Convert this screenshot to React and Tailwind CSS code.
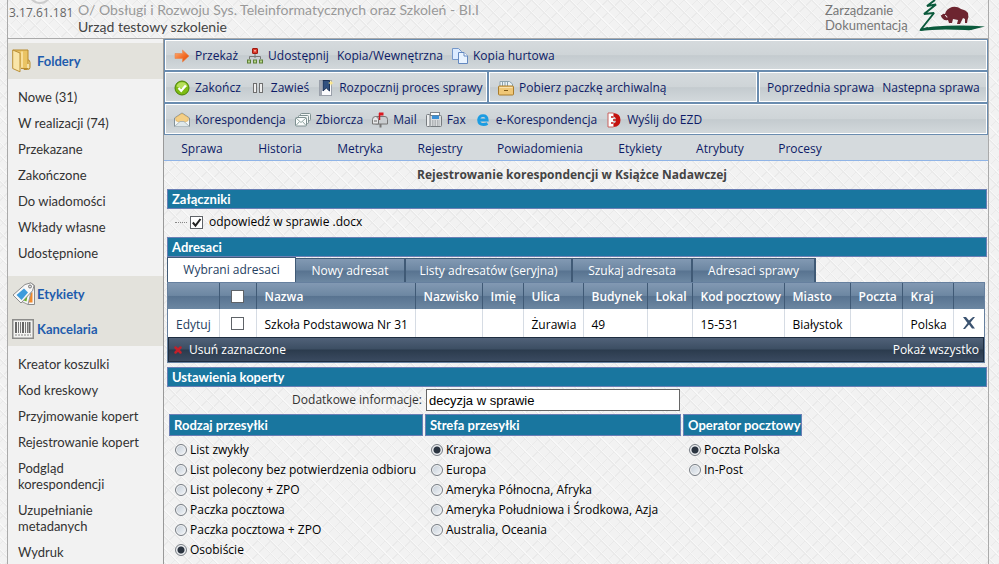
import React from 'react';
import { X } from 'lucide-react';

const FOLDERS = ['Nowe (31)', 'W realizacji (74)', 'Przekazane', 'Zakończone', 'Do wiadomości', 'Wkłady własne', 'Udostępnione'];

const OFFICE = [
  'Kreator koszulki',
  'Kod kreskowy',
  'Przyjmowanie kopert',
  'Rejestrowanie kopert',
  'Podgląd korespondencji',
  'Uzupełnianie metadanych',
  'Wydruk',
];

const SECTIONS = [
  { label: 'Sprawa', cls: 'w-[76px]' },
  { label: 'Historia', cls: 'w-20' },
  { label: 'Metryka', cls: 'w-20' },
  { label: 'Rejestry', cls: 'w-20' },
  { label: 'Powiadomienia', cls: 'w-[120px]' },
  { label: 'Etykiety', cls: 'w-20' },
  { label: 'Atrybuty', cls: 'w-20' },
  { label: 'Procesy', cls: 'w-20' },
];

const TABS = [
  { label: 'Nowy adresat', cls: 'w-[110px]' },
  { label: 'Listy adresatów (seryjna)', cls: 'w-[167px]' },
  { label: 'Szukaj adresata', cls: 'w-[120px]' },
  { label: 'Adresaci sprawy', cls: 'w-[123px]' },
];

const COLUMNS = [
  { label: 'Nazwa', value: 'Szkoła Podstawowa Nr 31', cls: '' },
  { label: 'Nazwisko', value: '', cls: 'w-[67px]' },
  { label: 'Imię', value: '', cls: 'w-[41px]' },
  { label: 'Ulica', value: 'Żurawia', cls: 'w-[60px]' },
  { label: 'Budynek', value: '49', cls: 'w-16' },
  { label: 'Lokal', value: '', cls: 'w-[45px]' },
  { label: 'Kod pocztowy', value: '15-531', cls: 'w-[92px]' },
  { label: 'Miasto', value: 'Białystok', cls: 'w-[66px]' },
  { label: 'Poczta', value: '', cls: 'w-[52px]' },
  { label: 'Kraj', value: 'Polska', cls: 'w-[51px]' },
];

const KINDS = [
  'List zwykły',
  'List polecony bez potwierdzenia odbioru',
  'List polecony + ZPO',
  'Paczka pocztowa',
  'Paczka pocztowa + ZPO',
  'Osobiście',
  '',
];
const ZONES = ['Krajowa', 'Europa', 'Ameryka Północna, Afryka', 'Ameryka Południowa i Środkowa, Azja', 'Australia, Oceania'];
const OPERATORS = ['Poczta Polska', 'In-Post'];

/* ---------- icons ---------- */

const ArrowIcon = () => (
  <svg width="16" height="16" viewBox="0 0 16 16">
    <defs>
      <linearGradient id="arrow" x1="0" y1="0" x2="1" y2="1">
        <stop offset="0" stopColor="#ffb37a" />
        <stop offset="0.6" stopColor="#f26a24" />
        <stop offset="1" stopColor="#d94400" />
      </linearGradient>
    </defs>
    <path d="M1 5.500h7.500V2L15 8l-6.500 6v-3.500H1z" fill="url(#arrow)" stroke="#e8864f" strokeWidth="0.600" />
  </svg>
);

const TreeIcon = () => (
  <svg width="16" height="16" viewBox="0 0 16 16">
    <path d="M8 6v4M2.500 11V8.500h11V11" fill="none" stroke="#777" />
    <rect x="5.500" y="0.500" width="5" height="5" rx="0.500" fill="#dc3b2c" stroke="#9e1a12" />
    <rect x="7" y="2" width="2" height="1.500" fill="#f6a59a" />
    {[0.5, 6.5, 12.5].map((x) => (
      <rect key={x} x={x} y="12" width="3" height="3" fill="#b6d48a" stroke="#5d7f36" />
    ))}
  </svg>
);

const CopyIcon = () => (
  <svg width="16" height="16" viewBox="0 0 16 16">
    <path d="M.5.5h6l3 3v8h-9z" fill="#dcebff" stroke="#7597c9" />
    <path d="M6.500 4.500h5.500l3.500 3.500v7.500h-9z" fill="#e9f3ff" stroke="#6388c0" />
    <path d="M12 4.500V8h3.500" fill="#fff" stroke="#6388c0" />
  </svg>
);

const CheckIcon = () => (
  <svg width="16" height="16" viewBox="0 0 16 16">
    <circle cx="8" cy="8" r="7" fill="#7dbb12" stroke="#4b8208" />
    <path d="M2.500 6.500a5.700 5.700 0 0 1 11 0q-5.500 3-11 0" fill="#b7df5c" />
    <path d="M4.500 8l2.700 2.800L11.800 5.500" fill="none" stroke="#fff" strokeWidth="2.200" />
  </svg>
);

const PauseIcon = () => (
  <svg width="12" height="16" viewBox="0 0 12 16">
    <rect x="1.500" y="3.500" width="3" height="9" fill="#eee" stroke="#6f6f6f" />
    <rect x="7.500" y="3.500" width="3" height="9" fill="#eee" stroke="#6f6f6f" />
  </svg>
);

const BookmarkIcon = () => (
  <svg width="16" height="16" viewBox="0 0 16 16">
    <rect x="1.500" y="0.500" width="12" height="15" fill="#fbfbfd" stroke="#9aa0aa" />
    <path d="M3 1v14" stroke="#4a5568" />
    <path d="M5 .5h6.500v10.500L8.300 8 5 11z" fill="#31507f" stroke="#1c3154" />
    <path d="M13 0l.8 2.200L16 3l-2.200.8L13 6l-.8-2.200L10 3l2.200-.8z" fill="#ffe98a" />
  </svg>
);

const ArchiveIcon = () => (
  <svg width="16" height="16" viewBox="0 0 16 16">
    <path d="M2 6V1.500h9.500l3 2.500v2" fill="#e9f1f4" stroke="#8da3ad" />
    <path d="M4.500 2v4M7 2v4M9.500 2v4" stroke="#8da3ad" />
    <rect x="0.500" y="6" width="15" height="9" rx="1" fill="#efc777" stroke="#a97c2c" />
    <path d="M1.500 7.500h13" stroke="#f9e2ad" />
    <path d="M6 10.500h4" stroke="#805a18" />
  </svg>
);

const EnvelopeIcon = () => (
  <svg width="18" height="16" viewBox="0 0 18 16">
    <path d="M1.500 6L9 1l7.500 5v8.500h-15z" fill="#f4f8f8" stroke="#84929a" />
    <path d="M2.500 5.800L9 1.500l6.500 4.300-.5 3L9 11 3 8.800z" fill="#f4cf86" stroke="#d7a650" strokeWidth="0.600" />
    <path d="M1.500 14.500L7 9.500h4l5.500 5" fill="#dfe8ea" stroke="#9caab0" strokeWidth="0.800" />
  </svg>
);

const StackIcon = () => (
  <svg width="16" height="16" viewBox="0 0 16 16">
    <rect x="5.500" y="1.500" width="10" height="7" rx="1" fill="#f3f7f6" stroke="#7e9091" />
    <rect x="3.500" y="3.500" width="10" height="8" rx="1" fill="#f3f7f6" stroke="#7e9091" />
    <rect x="0.500" y="5.500" width="11" height="8.500" rx="1" fill="#fafcfc" stroke="#7e9091" />
    <path d="M1 6l5 4.500L11 6M1 13.500l3.500-4M11 13.500l-3.500-4" fill="none" stroke="#8fa4a1" />
  </svg>
);

const MailboxIcon = () => (
  <svg width="16" height="16" viewBox="0 0 16 16">
    <path d="M3.500 4.500H13q2.500 0 2.500 3v4.500h-12z" fill="#c9cdd0" stroke="#777" />
    <path d="M.5 12V7.500q0-3 3-3t3 3V12z" fill="#e6e8e9" stroke="#777" />
    <path d="M2 9h3" stroke="#666" />
    <path d="M7.500 8V1" stroke="#c5161d" strokeWidth="1.500" />
    <rect x="7" y="0.500" width="4.500" height="3" fill="#dc1720" />
    <path d="M8.500 12v3.500" stroke="#777" strokeWidth="2" />
  </svg>
);

const FaxIcon = () => (
  <svg width="16" height="16" viewBox="0 0 16 16">
    <rect x="4.500" y="0.500" width="9" height="5" fill="#fff" stroke="#84888c" />
    <rect x="3.500" y="3.500" width="12" height="11" rx="1" fill="#d9dcde" stroke="#777c80" />
    <rect x="0.500" y="2.500" width="3.500" height="12" rx="1" fill="#eceeef" stroke="#777c80" />
    <rect x="6" y="3.500" width="7" height="3.500" fill="#3a8fd6" />
    <path d="M6 9h8M6 11h8M6 13h8" stroke="#8a8f93" strokeDasharray="1.500 1" />
  </svg>
);

const EdgeIcon = () => (
  <svg width="14" height="16" viewBox="0 0 14 16">
    <path d="M2.800 8h8.400Q11 3.600 7 3.600T2.600 8q.2 4.500 4.900 4.500 2.200 0 4-1" fill="none" stroke="#1b9ce2" strokeWidth="2.800" />
  </svg>
);

const EzdIcon = () => (
  <svg width="14" height="16" viewBox="0 0 14 16">
    <path d="M6.500 1H1v14h5.500" fill="#fff" stroke="#c8605c" />
    <path d="M6.500 1Q13.500 1.500 13.500 8t-7 7v-3.500Q9 11 9 8T6.500 4.500z" fill="#c4120e" />
    <path d="M4 5h2.500M6 8h3.500M4 11h2.500" stroke="#c4120e" strokeWidth="1.600" />
  </svg>
);

const FolderIcon = () => (
  <svg width="20" height="24" viewBox="0 0 20 24">
    <path d="M12 10.500h3.500q2.500.5 2.500 3v5q0 2-2.500 2H12z" fill="#f3d689" stroke="#b78a2e" />
    <path d="M1 1h15v18.500H9" fill="#eac464" stroke="#b78a2e" />
    <path d="M.7 1L8 4v18.800L.7 19.500z" fill="#f9e5a8" stroke="#bb9038" />
    <path d="M10 2.500v16" stroke="#f8df9c" strokeWidth="2" />
    <path d="M16 15v4" stroke="#fff2c4" strokeWidth="1.500" />
  </svg>
);

const TagsIcon = () => (
  <svg width="24" height="24" viewBox="0 0 24 24">
    <path d="M15 3l4-2 3.500 2.500v19H16z" fill="#f6f6f6" stroke="#8b8b8b" />
    <path d="M17.500 12l3-2v10.500h-4z" fill="#f18a2c" />
    <path d="M14 4l6 2-4 16.500L8.500 19z" fill="#f6f6f6" stroke="#999" />
    <path d="M16 11l-1.500 8.500-4-1.500z" fill="#6cb52a" />
    <path d="M1 13L13 2.500 19 .8l3 3-1.500 5L9 21z" fill="#f8f8f8" stroke="#8b8b8b" />
    <path d="M4.500 13l7.500-6.500 4 4-6.500 7.500z" fill="#3d9bdc" />
    <circle cx="18" cy="4.500" r="1.500" fill="#ddd" stroke="#777" />
  </svg>
);

const BarcodeIcon = () => (
  <svg width="22" height="20" viewBox="0 0 22 20">
    <rect x="0.750" y="0.750" width="20.500" height="18.500" fill="#f3f3f1" stroke="#8c8c8a" strokeWidth="1.500" />
    <path d="M4 3v11M11 3v11M17.500 3v11" stroke="#666" strokeWidth="2" />
    <path d="M6.500 3v11M8.500 3v11M13.500 3v11M15.500 3v11" stroke="#777" />
    <path d="M3 16h16" stroke="#888" strokeDasharray="2 1" />
  </svg>
);

const BisonLogo = () => (
  <svg width="68" height="34" viewBox="0 0 68 34" className="shrink-0">
    <path
      d="M17 0L9 6l9-1.500L6 14l10-1L2.500 30 10 28"
      fill="none"
      stroke="#0b5a3c"
      strokeWidth="2"
      strokeLinejoin="bevel"
    />
    <path d="M1 31Q4 27.500 16 26.500q26-2 51 0-6 1.500-12 3-2 1-8 .5Q20 28.500 1 31" fill="#0b5a3c" />
    <path
      d="M24 15q1-2 3-1 1-5 7-7 5-1 9 2 5 1 7 4 1 4-.5 7l-.5 3h-2v-4l-2-1-2 4-1 2h-3l1-4-5-1-1 4h-3l-1-3q-3 1-5-1-2-2-2-3-1-1 1-1"
      fill="#6d2530"
    />
    <path d="M27 15.500q2 0 2 2" fill="none" stroke="#f3f3f3" />
  </svg>
);

/* ---------- small pieces ---------- */

const ToolButton = ({ icon, children }) => (
  <button type="button" className="flex items-center gap-1 whitespace-nowrap">
    {icon && <span className="w-[18px] flex justify-center shrink-0">{icon}</span>}
    {children}
  </button>
);

const ToolGroup = ({ children, className = '' }) => (
  <div
    className={`h-8 flex items-center gap-2 pt-[2px] px-2 border border-[#6a8caf] outline outline-1 -outline-offset-2 outline-white bg-[linear-gradient(#d6dbde_0%,#ced4d7_50%,#c4cbcf_52%,#d3d9dc_100%)] ${className}`}
  >
    {children}
  </div>
);

const SectionBar = ({ children }) => (
  <h2 className="h-5 px-1 flex items-center border border-[#6b7fb5] bg-[#19769f] text-white font-bold text-[13px] font-['Lato',sans-serif]">
    {children}
  </h2>
);

const SideHeading = ({ icon, children, className = '' }) => (
  <h2 className={`flex items-center pl-1 bg-[#e3e2dc] text-[#1f5cad] font-bold text-[13px] ${className}`}>
    <span className="w-[25px] shrink-0">{icon}</span>
    {children}
  </h2>
);

const SideMenu = ({ items, className = '' }) => (
  <ul className={`flex flex-col gap-[10px] pl-[10px] text-[13px] leading-4 text-[#333] ${className}`}>
    {items.map((item) => (
      <li key={item}>
        <a href="#" className="block max-w-[130px]">{item}</a>
      </li>
    ))}
  </ul>
);

function RadioGroup({ title, name, options, selected, className = '' }) {
  return (
    <fieldset className={`min-w-0 ${className}`}>
      <legend className="w-full h-[22px] px-1 flex items-center border border-[#6b7fb5] bg-[#19769f] text-white font-bold text-[13px] whitespace-nowrap font-['Lato',sans-serif]">
        {title}
      </legend>
      <div className="pt-1 pl-[6px]">
        {options.map((option) => (
          <label key={option} className="h-5 flex items-center gap-[3px] whitespace-nowrap">
            <input
              type="radio"
              name={name}
              defaultChecked={option === selected}
              className="appearance-none w-3 h-3 shrink-0 rounded-full border border-[#777d84] shadow-[inset_0_0_0_1px_#f4f4f4] bg-linear-to-br from-[#c3ccd6] to-[#f4f7fa] checked:bg-[radial-gradient(circle,#2b3440_0_3px,#d5dae0_4px)]"
            />
            {option}
          </label>
        ))}
      </div>
    </fieldset>
  );
}

const Checkbox = (props) => (
  <span className="relative block w-[13px] h-[13px] shrink-0">
    <input
      type="checkbox"
      className="peer appearance-none block w-[13px] h-[13px] border border-[#5f6368] bg-white"
      {...props}
    />
    <svg viewBox="0 0 13 13" className="hidden peer-checked:block absolute inset-0 pointer-events-none">
      <path d="M2.800 6.500l2.700 3.200L10.500 3" fill="none" stroke="#222" strokeWidth="2" />
    </svg>
  </span>
);

function AddressTable() {
  const head = 'h-[26px] border-l border-[#405a76] px-2 pt-[2px] text-left font-semibold';
  const cell = 'h-[28px] border-l border-[#d6dce4] px-2 pt-[3px] text-black';

  return (
    <div className="mr-[2px] border border-[#66809f]">
      <table className="w-full table-fixed border-collapse whitespace-nowrap">
        <thead className="bg-[linear-gradient(#8299b3_0%,#6d87a2_48%,#587390_50%,#6c87a2_100%)] text-white">
          <tr>
            <th className="w-[51px]" aria-label="Edycja" />
            <th className="w-[37px] border-l border-[#405a76]">
              <div className="flex justify-center">
                <Checkbox aria-label="Zaznacz wszystkie" />
              </div>
            </th>
            {COLUMNS.map((col) => (
              <th key={col.label} className={`${head} ${col.cls}`}>{col.label}</th>
            ))}
            <th className="w-[31px] border-l border-[#405a76]" aria-label="Usuń" />
          </tr>
        </thead>
        <tbody className="bg-white">
          <tr>
            <td className="h-[28px] px-2 pt-[3px]">
              <a href="#" className="text-[#24405f]">Edytuj</a>
            </td>
            <td className="border-l border-[#d6dce4]">
              <div className="flex justify-center">
                <Checkbox aria-label="Zaznacz wiersz" />
              </div>
            </td>
            {COLUMNS.map((col) => (
              <td key={col.label} className={cell}>{col.value}</td>
            ))}
            <td className="border-l border-[#d6dce4]">
              <button type="button" aria-label="Usuń adresata" className="block mx-auto text-[#3b5370]">
                <svg width="14" height="14" viewBox="0 0 14 14">
                  <path d="M1 1h3l3 3.500L11 1h2L8.500 6.500l4.500 6h-3L7 8.500 3 13H1l4.500-6z" fill="currentColor" />
                </svg>
              </button>
            </td>
          </tr>
        </tbody>
      </table>
      <div className="h-[25px] flex items-center justify-between px-1 border border-[#1e2d40] bg-[linear-gradient(#506178_0%,#3c4e63_48%,#2b3b4d_52%,#3a4a60_100%)] text-white">
        <button type="button" className="flex items-center gap-[6px]">
          <X size={10} strokeWidth={6} className="text-[#c3202a]" />
          Usuń zaznaczone
        </button>
        <button type="button">Pokaż wszystko</button>
      </div>
    </div>
  );
}

export default function App() {
  const tabBg = 'bg-[linear-gradient(#8299b3_0%,#6d87a2_48%,#587390_52%,#6c87a2_100%)]';

  return (
    <div className="h-screen overflow-hidden px-[7px] pr-[10px] flex flex-col text-[12px] leading-4 text-[#222] font-['Open_Sans','Noto_Sans',sans-serif] bg-[#f2f2f2] bg-[repeating-linear-gradient(45deg,#eaeaea_0_1px,#f8f8f8_1px_2px,transparent_2px_9px),repeating-linear-gradient(-45deg,#eaeaea_0_1px,transparent_1px_9px)]">
      <header className="h-[39px] shrink-0 flex items-start pr-[2px] border-x border-b border-[#aaa] text-[14px] font-['Lato',sans-serif]">
        <div className="w-[70px] shrink-0 relative pt-1 pl-px text-[12px] leading-[18px] text-[#666] font-['Open_Sans',sans-serif]">
          <span className="absolute left-5 -top-5 w-6 h-6 rounded-full border-2 border-[#ccc]" />
          3.17.61.181
        </div>
        <div className="grow leading-[17px] pt-px">
          <p className="text-[#999]">O/ Obsługi i Rozwoju Sys. Teleinformatycznych oraz Szkoleń - BI.I</p>
          <p className="text-[#444]">Urząd testowy szkolenie</p>
        </div>
        <p className="w-[93px] pt-[3px] text-[13px] leading-[15px] text-[#777]">Zarządzanie Dokumentacją</p>
        <BisonLogo />
      </header>

      <div className="grow min-h-0 flex border-x border-[#aaa]">
        <nav className="w-[156px] shrink-0 border-r border-[#999] bg-[#f2f2f2] pt-1 font-['Lato',sans-serif]">
          <SideHeading icon={<FolderIcon />} className="h-[36px]">Foldery</SideHeading>
          <SideMenu items={FOLDERS} className="pt-[10px] pb-[15px]" />
          <SideHeading icon={<TagsIcon />} className="h-[35px]">Etykiety</SideHeading>
          <SideHeading icon={<BarcodeIcon />} className="h-[35px]">Kancelaria</SideHeading>
          <SideMenu items={OFFICE} className="pt-[10px]" />
        </nav>

        <main className="grow min-w-0">
          <div className="text-[#0d1b66]">
            <ToolGroup>
              <ToolButton icon={<ArrowIcon />}>Przekaż</ToolButton>
              <ToolButton icon={<TreeIcon />}>Udostępnij</ToolButton>
              <ToolButton>Kopia/Wewnętrzna</ToolButton>
              <ToolButton icon={<CopyIcon />}>Kopia hurtowa</ToolButton>
            </ToolGroup>
            <div className="flex">
              <ToolGroup className="w-[324px]">
                <ToolButton icon={<CheckIcon />}>Zakończ</ToolButton>
                <ToolButton icon={<PauseIcon />}>Zawieś</ToolButton>
                <ToolButton icon={<BookmarkIcon />}>Rozpocznij proces sprawy</ToolButton>
              </ToolGroup>
              <ToolGroup className="grow">
                <ToolButton icon={<ArchiveIcon />}>Pobierz paczkę archiwalną</ToolButton>
              </ToolGroup>
              <ToolGroup className="w-[230px]">
                <ToolButton>Poprzednia sprawa</ToolButton>
                <ToolButton>Nastepna sprawa</ToolButton>
              </ToolGroup>
            </div>
            <ToolGroup>
              <ToolButton icon={<EnvelopeIcon />}>Korespondencja</ToolButton>
              <ToolButton icon={<StackIcon />}>Zbiorcza</ToolButton>
              <ToolButton icon={<MailboxIcon />}>Mail</ToolButton>
              <ToolButton icon={<FaxIcon />}>Fax</ToolButton>
              <ToolButton icon={<EdgeIcon />}>e-Korespondencja</ToolButton>
              <ToolButton icon={<EzdIcon />}>Wyślij do EZD</ToolButton>
            </ToolGroup>
            <nav className="h-[26px] pt-[2px] flex items-center bg-[#d5dadd] border-b border-[#90b4e6] text-center">
              {SECTIONS.map((s) => (
                <a key={s.label} href="#" className={s.cls}>{s.label}</a>
              ))}
            </nav>
          </div>

          <h1 className="h-7 pr-2 flex items-center justify-center text-[12px] font-bold text-[#444]">
            Rejestrowanie korespondencji w Książce Nadawczej
          </h1>

          <div className="pl-[3px] pr-px">
            <SectionBar>Załączniki</SectionBar>
            <label className="h-7 pl-2 pb-[2px] flex items-center gap-[3px]">
              <span className="w-3 border-t border-dotted border-[#888]" />
              <Checkbox defaultChecked />
              <span className="pl-[3px] text-black">odpowiedź w sprawie .docx</span>
            </label>

            <SectionBar>Adresaci</SectionBar>
            <div className="h-[25px] flex items-end text-white">
              <button type="button" className="w-[129px] h-[25px] bg-white border-x border-t border-[#405a76] text-[#24405f]">
                Wybrani adresaci
              </button>
              {TABS.map((tab) => (
                <button
                  key={tab.label}
                  type="button"
                  className={`h-6 border-r-2 border-t border-[#405a76] whitespace-nowrap ${tabBg} ${tab.cls}`}
                >
                  {tab.label}
                </button>
              ))}
            </div>
            <AddressTable />

            <div className="pt-1">
              <SectionBar>Ustawienia koperty</SectionBar>
            </div>
            <div className="pt-[2px] pb-[3px] flex items-center">
              <label htmlFor="extra" className="w-[259px] pr-1 text-right text-[#333]">Dodatkowe informacje:</label>
              <input
                id="extra"
                type="text"
                defaultValue="decyzja w sprawie"
                className="w-[254px] h-[22px] px-[2px] bg-white border border-[#666] text-[13px] text-black font-['Liberation_Sans',sans-serif]"
              />
            </div>
            <div className="flex gap-[2px] pl-[2px] text-black">
              <RadioGroup title="Rodzaj przesyłki" name="kind" options={KINDS} selected="Osobiście" className="w-[254px]" />
              <RadioGroup title="Strefa przesyłki" name="zone" options={ZONES} selected="Krajowa" className="w-[256px]" />
              <RadioGroup title="Operator pocztowy" name="operator" options={OPERATORS} selected="Poczta Polska" className="w-[119px]" />
            </div>
          </div>
        </main>
      </div>
    </div>
  );
}
